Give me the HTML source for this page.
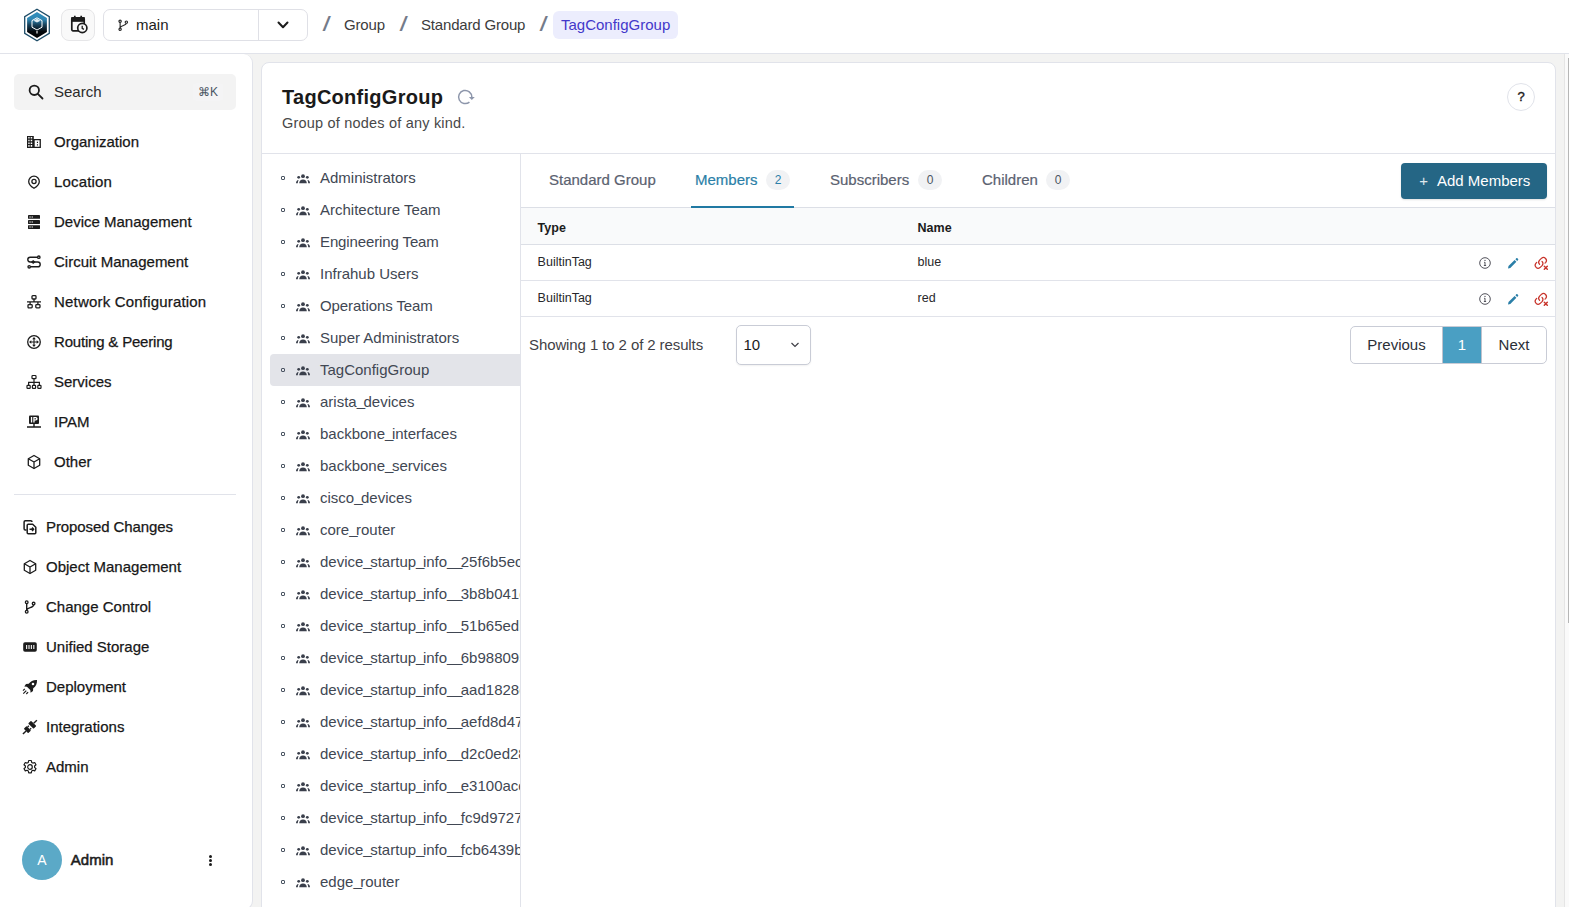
<!DOCTYPE html>
<html lang="en">
<head>
<meta charset="utf-8">
<title>TagConfigGroup - Infrahub</title>
<style>
*{box-sizing:border-box;margin:0;padding:0}
html,body{width:1569px;height:907px;overflow:hidden}
body{font-family:"Liberation Sans",Arial,sans-serif;background:#f3f3f2;color:#1c1c1c;position:relative;font-size:14px}
svg{display:block}
.abs{position:absolute}
/* ---------- header ---------- */
#header{position:absolute;left:0;top:0;width:1569px;height:54px;background:#fff;border-bottom:1px solid #e1e3ea}
#logo{position:absolute;left:23px;top:8px;width:28px;height:34px}
#timebtn{position:absolute;left:61px;top:9px;width:34px;height:32px;border:1px solid #e6e6e8;border-radius:8px;background:#f9f9f9}
#timebtn svg{position:absolute;left:7.500px;top:4.300px}
#branch{position:absolute;left:103px;top:9px;width:205px;height:32px;border:1px solid #dfe0e6;border-radius:7px;background:#fff}
#branch .div{position:absolute;left:154px;top:0;width:1px;height:30px;background:#dfe0e6}
#branch .name{position:absolute;left:32px;top:0;line-height:30px;font-size:15px;color:#1c1c1c}
#branch svg.bi{position:absolute;left:13px;top:9px}
#branch svg.chev{position:absolute;left:172px;top:9px}
.crumb{position:absolute;top:12px;height:26px;line-height:26px;font-size:15px;color:#3c3c3c;white-space:nowrap}
.crumb.sep{color:#747b89;font-size:20px;transform:scaleX(1.5);transform-origin:50% 50%;top:11px}
.crumb.cur{background:#ecedfd;color:#4338ca;border-radius:6px;padding:0 8px;top:11px;height:28px;line-height:28px}
/* ---------- sidebar ---------- */
#sidebar{position:absolute;left:-1px;top:54px;width:254px;height:856px;background:#fff;border:1px solid #e1e3ea;border-top:none;border-radius:0 9px 9px 0}
#search{position:absolute;left:14px;top:74px;width:222px;height:36px;background:#f3f3f3;border-radius:5px}
#search svg{position:absolute;left:13px;top:9px}
#search .t{position:absolute;left:40px;top:0;line-height:36px;font-size:15px;color:#2a2a2a}
#search .k{position:absolute;right:13px;top:9px;height:18px;line-height:18px;font-size:12px;color:#4b5563;padding:0 5px;background:#f4f4f5;border-radius:4px}
.nav{position:absolute;left:0;height:40px;width:252px}
.nav svg{position:absolute;top:12px}
.nav .l{position:absolute;top:0;line-height:40px;font-size:15px;color:#171717;white-space:nowrap;-webkit-text-stroke:.25px #171717}
.nav.a svg{left:26px}.nav.a .l{left:54px}
.nav.b svg{left:22px}.nav.b .l{left:46px}
#navsep{position:absolute;left:14px;top:494px;width:222px;height:1px;background:#e1e3ea}
#avatar{position:absolute;left:22px;top:840px;width:40px;height:40px;border-radius:50%;background:#5ba9c7;color:#fff;text-align:center;line-height:40px;font-size:14px}
#uname{position:absolute;left:70.800px;top:849px;line-height:22px;font-size:15px;color:#1c1c1c;-webkit-text-stroke:.55px #1c1c1c}
#udots{position:absolute;left:208.800px;top:854.500px;width:4px}
#udots i{display:block;width:3px;height:3px;border-radius:50%;background:#1c1c1c;margin-bottom:1.200px}
/* ---------- main card ---------- */
#card{position:absolute;left:261px;top:62px;width:1295px;height:860px;background:#fff;border:1px solid #e1e3ea;border-radius:8px}
#title{position:absolute;left:282px;top:83px;line-height:28px;font-size:20px;font-weight:bold;color:#1a1a1a;white-space:nowrap;letter-spacing:.27px}
#refresh{position:absolute;left:456px;top:88px}
#subtitle{position:absolute;left:282px;top:113px;line-height:20px;font-size:14.500px;color:#484848;white-space:nowrap;letter-spacing:.2px}
#help{position:absolute;left:1507px;top:83px;width:28px;height:28px;border:1px solid #e1e3ea;border-radius:50%;text-align:center;line-height:26px;font-size:13px;color:#1c1c1c;background:#fff;-webkit-text-stroke:.4px #1c1c1c}
#hdiv{position:absolute;left:262px;top:153px;width:1293px;height:1px;background:#e1e3ea}
#vdiv{position:absolute;left:520px;top:154px;width:1px;height:760px;background:#e1e3ea}
/* tree */
#tree{position:absolute;left:263px;top:154px;width:257px;height:760px;overflow:hidden}
.ti{position:absolute;left:7px;width:250px;height:32px;white-space:nowrap}
.ti.sel{background:#e3e4e9;border-radius:4px 0 0 4px}
.ti .d{position:absolute;left:11px;top:14px;width:4px;height:4px;border:1px solid #4b5563;border-radius:1px}
.ti svg{position:absolute;left:25px;top:11px}
.ti .n i{font-style:normal;letter-spacing:-1.500px;position:relative;top:-1.500px}
.ti .n{position:absolute;left:50px;top:0;line-height:32px;font-size:15px;color:#414753}
/* tabs */
.tab{position:absolute;top:154px;height:53px;line-height:52px;font-size:15px;color:#5b6270;white-space:nowrap;-webkit-text-stroke:.2px currentColor}
.tab.on{color:#2b7fa8}
.badge{position:absolute;top:170px;height:20px;min-width:24px;border-radius:10px;background:#f1f2f4;color:#4b5563;font-size:12px;line-height:20px;text-align:center}
#tabline{position:absolute;left:691px;top:206px;width:103px;height:2px;background:#2079a3;z-index:2}
#addbtn{position:absolute;left:1401px;top:163px;width:146px;height:36px;border-radius:4px;background:#256685;box-shadow:0 1px 2px rgba(0,0,0,.12);color:#fff;font-size:15px;line-height:36px;white-space:nowrap}
#addbtn .p{position:absolute;left:18.300px;top:-.5px;font-size:15px;opacity:.85}
#addbtn .t{position:absolute;left:36px;top:0}
/* table */
#thead{position:absolute;left:521px;top:207px;width:1034px;height:38px;background:#f9fafb;border-top:1px solid #dcdfe6;border-bottom:1px solid #dcdfe6}
.th{position:absolute;margin-left:.6px;top:209px;line-height:38px;font-size:12.5px;font-weight:bold;color:#1c1c1c}
.td{position:absolute;margin-left:.6px;line-height:36px;font-size:12.5px;color:#27272a}
.rline{position:absolute;left:521px;width:1034px;height:1px;background:#e1e3ea}
.act{position:absolute}
/* pagination */
#showing{position:absolute;left:529px;top:326px;line-height:38px;font-size:15px;color:#3f3f46;white-space:nowrap;letter-spacing:-.1px}
#psel{position:absolute;left:736px;top:325px;width:75px;height:40px;border:1px solid #c9ccd6;border-radius:5px;background:#fff;box-shadow:0 1px 2px rgba(0,0,0,.06)}
#psel .v{position:absolute;left:6.500px;top:0;line-height:38px;font-size:15px;color:#1c1c1c}
#psel svg{position:absolute;left:53px;top:15px}
#pager{position:absolute;left:1350px;top:326px;width:197px;height:38px;border:1px solid #c9ccd6;border-radius:5px;background:#fff;overflow:hidden}
#pager span{position:absolute;top:0;height:36px;line-height:36px;font-size:15px;color:#2b2f38;text-align:center}
#pager .pv{left:0;width:91px}
#pager .pn{left:91px;width:40px;background:#4a9fc3;color:#fff;border-left:1px solid #bfc2cd;border-right:1px solid #bfc2cd}
#pager .nx{left:131px;width:64px}
/* scrollbar */
#sbtrack{position:absolute;left:1564px;top:54px;width:5px;height:853px;background:#fafafa;border-left:1px solid #e5e5e5}
#sbthumb{position:absolute;left:1568px;top:58px;width:2px;height:565px;background:#b6b6b6}
</style>
</head>
<body>
<div id="header">
  <svg id="logo" viewBox="0 0 28 34">
    <defs><linearGradient id="lg" x1="0" y1="0" x2="0" y2="1"><stop offset="0" stop-color="#2f8fbd"/><stop offset=".28" stop-color="#2f86b2"/><stop offset=".5" stop-color="#163f58"/><stop offset=".75" stop-color="#05090d"/><stop offset="1" stop-color="#000"/></linearGradient></defs>
    <polygon points="14,1.2 26.3,8.6 26.3,25.4 14,32.8 1.7,25.4 1.7,8.600" fill="#fff" stroke="#1f4d68" stroke-width="1.3"/>
    <polygon points="14,4 23.9,10 23.9,24 14,30 4.1,24 4.1,10" fill="url(#lg)"/>
    <path d="M14 9.800 L19 12.600 L19 19.200 L14 22 L9 19.200 L9 12.600 Z" fill="none" stroke="#fff" stroke-width="1"/>
    <path d="M10.500 12.700 L14 14.600 L17.500 12.700 L14 10.800 Z" fill="#fff" opacity=".85"/>
    <path d="M14 23 L14 25.400" stroke="#fff" stroke-width="1.1"/>
  </svg>
  <div id="timebtn">
    <svg width="18" height="20" viewBox="0 0 18 20" fill="none" stroke="#1c1c1c">
      <rect x="1.800" y="3.800" width="12.400" height="13" rx="1.200" stroke-width="1.700"/>
      <rect x="1.800" y="3.800" width="12.400" height="3.400" fill="#1c1c1c" stroke-width="1.200"/>
      <path d="M4.800 1.800v2.500M11.200 1.800v2.500" stroke-width="1.700"/>
      <circle cx="12.300" cy="14" r="4.600" fill="#f9f9f9" stroke-width="1.700"/>
      <path d="M12.200 11.800v2.500l1.700 1.100" stroke-width="1.300"/>
    </svg>
  </div>
  <div id="branch">
    <svg class="bi" width="12.500" height="12.500" viewBox="0 0 14 14" fill="none" stroke="#2a2a2a" stroke-width="1.300">
      <circle cx="3.500" cy="2.500" r="1.300"/><circle cx="3.500" cy="11.500" r="1.300"/><circle cx="10.500" cy="3.500" r="1.300"/>
      <path d="M3.500 3.800v6.400M10.500 4.800c0 3-7 2-7 5.400"/>
    </svg>
    <span class="name">main</span>
    <span class="div"></span>
    <svg class="chev" width="14" height="12" viewBox="0 0 14 12" fill="none" stroke="#1c1c1c" stroke-width="2" stroke-linecap="round" stroke-linejoin="round"><path d="M2.500 3.500L7 8.200l4.500-4.700"/></svg>
  </div>
  <span class="crumb sep" style="left:323.500px">/</span>
  <span class="crumb" style="left:344px;letter-spacing:-.15px">Group</span>
  <span class="crumb sep" style="left:400.500px">/</span>
  <span class="crumb" style="left:421px;letter-spacing:-.18px">Standard Group</span>
  <span class="crumb sep" style="left:541px">/</span>
  <span class="crumb cur" style="left:553px">TagConfigGroup</span>
</div>
<div id="sidebar"></div>
<nav id="sidenav">
<div id="search"><svg width="18" height="18" viewBox="0 0 18 18" fill="none" stroke="#1c1c1c" stroke-width="1.800"><circle cx="7.300" cy="7.300" r="4.700"/><path d="M10.800 10.800l4.700 4.700" stroke-linecap="round"/></svg><span class="t">Search</span><span class="k">⌘K</span></div>
<a class="nav a" style="top:122px"><svg width="16" height="16" viewBox="0 0 16 16"><path d="M1 2h6.800v2.900h7.100V14H1z" fill="#1c1c1c"/><path d="M2.300 3.100h1.300v1.500H2.300zM4.700 3.100h1.500v1.500H4.700zM2.300 5.700h1.300v1.500H2.300zM4.700 5.700h1.500v1.500H4.700zM2.300 8.400h1.300v1.500H2.300zM4.700 8.400h1.500v1.500H4.700zM2.300 11h1.300v1.700H2.300zM4.700 11h1.500v1.700H4.700zM8.700 6.200h4.900v6.600H8.700z" fill="#fff"/><path d="M10.900 7.700h1.100v1.200h-1.100zM10.900 10.300h1.100v1.200h-1.100z" fill="#1c1c1c"/></svg><span class="l">Organization</span></a>
<a class="nav a" style="top:162px"><svg width="16" height="16" viewBox="0 0 16 16" fill="none" stroke="#1c1c1c" stroke-width="1.300"><path d="M8 14.300c-2.500-1.500-5.300-3.500-5.300-6.800a5.300 5.300 0 0 1 10.600 0c0 3.300-2.800 5.300-5.300 6.800z"/><circle cx="8" cy="7.500" r="2.100"/></svg><span class="l" style="letter-spacing:.15px">Location</span></a>
<a class="nav a" style="top:202px"><svg width="16" height="16" viewBox="0 0 16 16" fill="#1c1c1c"><rect x="2" y="1" width="12" height="3.800" rx=".4"/><rect x="2" y="6.100" width="12" height="3.800" rx=".4"/><rect x="2" y="11.200" width="12" height="3.800" rx=".4"/><path d="M3.400 2.400h1.300v1H3.400zM5.600 2.400h1.300v1H5.600zM3.400 7.500h1.300v1H3.400zM5.600 7.500h1.300v1H5.600zM3.400 12.600h1.300v1H3.400zM5.600 12.600h1.300v1H5.600z" fill="#fff"/></svg><span class="l">Device Management</span></a>
<a class="nav a" style="top:242px"><svg width="16" height="16" viewBox="0 0 16 16" fill="none" stroke="#1c1c1c" stroke-width="1.400"><path d="M11.500 3.200H4.200a2.300 2.300 0 0 0 0 4.800h7.600a2.300 2.300 0 0 1 0 4.800H4.500"/><circle cx="12.800" cy="3.200" r="1.200" fill="#fff"/><circle cx="3.200" cy="12.800" r="1.200" fill="#fff"/><path d="M4.800 8l2.400-1.900L9.600 8 7.200 9.900z" fill="#1c1c1c" stroke="none"/></svg><span class="l">Circuit Management</span></a>
<a class="nav a" style="top:282px"><svg width="16" height="16" viewBox="0 0 16 16" fill="none" stroke="#1c1c1c" stroke-width="1.300"><rect x="6" y="1.700" width="4" height="3.300" rx=".8"/><rect x="2" y="10.600" width="4.200" height="3.300" rx=".8"/><rect x="9.800" y="10.600" width="4.200" height="3.300" rx=".8"/><path d="M8 5v2.800M1 7.900h14M4.100 7.900v2.700M11.900 7.900v2.700"/></svg><span class="l" style="letter-spacing:.19px">Network Configuration</span></a>
<a class="nav a" style="top:322px"><svg width="16" height="16" viewBox="0 0 16 16" fill="none" stroke="#1c1c1c"><circle cx="8" cy="8" r="6.300" stroke-width="1.300"/><path d="M8 3l1.800 2.300H6.200zM8 13l1.800-2.300H6.200zM3 8l2.300-1.800v3.600zM13 8l-2.300-1.800v3.600z" fill="#1c1c1c" stroke="none"/><path d="M8 4.500v7M4.500 8h7" stroke-width="1.100"/></svg><span class="l" style="letter-spacing:-.19px">Routing &amp; Peering</span></a>
<a class="nav a" style="top:362px"><svg width="16" height="16" viewBox="0 0 16 16" fill="none" stroke="#1c1c1c" stroke-width="1.200"><rect x="6" y="1.500" width="4" height="3.200" rx=".8"/><rect x="1" y="11.300" width="3.200" height="3" rx=".6"/><rect x="6.400" y="11.300" width="3.200" height="3" rx=".6"/><rect x="11.800" y="11.300" width="3.200" height="3" rx=".6"/><path d="M8 4.700v6.600M2.600 11.300V8.400h10.800v2.900"/></svg><span class="l">Services</span></a>
<a class="nav a" style="top:402px"><svg width="16" height="16" viewBox="0 0 16 16"><rect x="3" y="1.500" width="10" height="8.500" rx="1" fill="#1c1c1c"/><path d="M4.900 3h1.300v5.400H4.900zM7.300 3h2.500a1.800 1.800 0 0 1 0 3.600H8.600v1.800H7.300z" fill="#fff"/><path d="M8.600 4.100h1.100v1.400H8.600z" fill="#1c1c1c"/><path d="M8 10v2.800M1 13h14M6 13h4" stroke="#1c1c1c" stroke-width="1.400" fill="none"/></svg><span class="l">IPAM</span></a>
<a class="nav a" style="top:442px"><svg width="16" height="16" viewBox="0 0 16 16" fill="none" stroke="#1c1c1c" stroke-width="1.300" stroke-linejoin="round"><path d="M8 1.500l5.700 3.200v6.600L8 14.500l-5.700-3.200V4.700z"/><path d="M2.300 4.700L8 8l5.700-3.300M8 8v6.500"/></svg><span class="l">Other</span></a>
<div id="navsep"></div>
<a class="nav b" style="top:507px"><svg width="16" height="16" viewBox="0 0 16 16" fill="none" stroke="#1c1c1c" stroke-width="1.500" stroke-linejoin="round"><path d="M4.500 11H3.300a1.200 1.200 0 0 1-1.200-1.200V2.900a1.200 1.200 0 0 1 1.200-1.200h5.500a1.200 1.200 0 0 1 1.200 1.200"/><path d="M6.200 5.200h4.500l3.100 3v5.500a1 1 0 0 1-1 1H6.200a1 1 0 0 1-1-1V6.200a1 1 0 0 1 1-1z"/><path d="M7.500 10.300h4M10 8.600l1.700 1.700-1.700 1.700"/></svg><span class="l" style="letter-spacing:-.1px">Proposed Changes</span></a>
<a class="nav b" style="top:547px"><svg width="16" height="16" viewBox="0 0 16 16" fill="none" stroke="#1c1c1c" stroke-width="1.300" stroke-linejoin="round"><path d="M8 1.500l5.700 3.200v6.600L8 14.500l-5.700-3.200V4.700z"/><path d="M2.300 4.700L8 8l5.700-3.300M8 8v6.500"/></svg><span class="l">Object Management</span></a>
<a class="nav b" style="top:587px"><svg width="16" height="16" viewBox="0 0 16 16" fill="none" stroke="#1c1c1c" stroke-width="1.300"><circle cx="4.700" cy="3.300" r="1.350"/><circle cx="4.700" cy="12.700" r="1.350"/><circle cx="11.600" cy="4.600" r="1.350"/><path d="M4.700 4.700v6.600M11.600 6c0 3.200-6.900 2-6.900 5.300" stroke-width="1.400"/></svg><span class="l">Change Control</span></a>
<a class="nav b" style="top:627px"><svg width="16" height="16" viewBox="0 0 16 16"><rect x="1.200" y="3.200" width="13.600" height="9.600" rx="1.800" fill="#1c1c1c"/><path d="M4 6h1.200v4H4zM6.400 6h1.200v4H6.400zM8.800 6H10v4H8.800zM11.200 6h1.200v4h-1.200z" fill="#fff" opacity=".9"/></svg><span class="l">Unified Storage</span></a>
<a class="nav b" style="top:667px"><svg width="16" height="16" viewBox="0 0 16 16" fill="#1c1c1c"><path d="M15 1c-3.500-.2-6.300 1-8.300 3.800L4 5 2.300 7.400l2.600.3 3.400 3.400.3 2.600L11 12l.2-2.700C14 7.300 15.200 4.500 15 1zM11 6.300a1.300 1.300 0 1 1 0-2.600 1.300 1.300 0 0 1 0 2.600z"/><path d="M1.300 14.700l3-3M1 11.700l1.800-1.800M4.300 15l1.800-1.800" stroke="#1c1c1c" stroke-width="1.200" fill="none"/></svg><span class="l">Deployment</span></a>
<a class="nav b" style="top:707px"><svg width="16" height="16" viewBox="0 0 16 16" fill="#1c1c1c"><g transform="rotate(-45 8 8)"><rect x="-2" y="7.300" width="4.500" height="1.400"/><rect x="2.300" y="4.900" width="4" height="6.200" rx=".7"/><rect x="6.300" y="5.700" width="1.700" height="1.300"/><rect x="6.300" y="9" width="1.700" height="1.300"/><rect x="9.200" y="4.200" width="4" height="7.600" rx=".7"/><rect x="13.200" y="7.300" width="4.500" height="1.400"/></g></svg><span class="l">Integrations</span></a>
<a class="nav b" style="top:747px"><svg width="16" height="16" viewBox="0 0 16 16" fill="none" stroke="#1c1c1c" stroke-width="1.200" stroke-linejoin="round"><path d="M6.700 1.500h2.600l.4 1.900 1.200.7 1.800-.6 1.300 2.200-1.400 1.300v1.400l1.400 1.300-1.300 2.200-1.800-.6-1.200.7-.4 1.900H6.700l-.4-1.900-1.200-.7-1.800.6L2 9.700l1.400-1.300V7L2 5.700l1.300-2.200 1.800.6 1.200-.7z"/><circle cx="8" cy="8" r="2.300"/></svg><span class="l">Admin</span></a>
<div id="avatar">A</div><div id="uname">Admin</div><div id="udots"><i></i><i></i><i></i></div>
</nav>
<div id="card"></div>
<main id="content">
<h1 id="title">TagConfigGroup</h1>
<svg id="refresh" width="20" height="18" viewBox="0 0 20 18" fill="none"><path d="M15.800 9A6.600 6.600 0 1 0 13.440 14.060" stroke="#8d96ab" stroke-width="1.500"/><path d="M12.900 9.100h5.900l-3 2.900z" fill="#8d96ab"/></svg>
<p id="subtitle">Group of nodes of any kind.</p>
<div id="help">?</div>
<div id="hdiv"></div><div id="vdiv"></div>
<div id="tree">
<div class="ti" style="top:8px"><span class="d"></span><svg width="16" height="12" viewBox="0 0 16 12" fill="#3a3f4b"><circle cx="8" cy="3.200" r="1.900"/><circle cx="3.700" cy="4.300" r="1.400"/><circle cx="12.300" cy="4.300" r="1.400"/><path d="M4.200 10.300c0-2.300 1.600-3.700 3.800-3.700s3.800 1.400 3.800 3.700z"/><path d="M1 10.300c0-1.800.9-3 2.600-3.200-.5.800-.8 1.900-.8 3.200zM15 10.300c0-1.800-.9-3-2.600-3.200.5.800.8 1.900.8 3.200z"/></svg><span class="n">Administrators</span></div>
<div class="ti" style="top:40px"><span class="d"></span><svg width="16" height="12" viewBox="0 0 16 12" fill="#3a3f4b"><circle cx="8" cy="3.200" r="1.900"/><circle cx="3.700" cy="4.300" r="1.400"/><circle cx="12.300" cy="4.300" r="1.400"/><path d="M4.200 10.300c0-2.300 1.600-3.700 3.800-3.700s3.800 1.400 3.800 3.700z"/><path d="M1 10.300c0-1.800.9-3 2.600-3.200-.5.800-.8 1.900-.8 3.200zM15 10.300c0-1.800-.9-3-2.600-3.200.5.800.8 1.900.8 3.200z"/></svg><span class="n">Architecture Team</span></div>
<div class="ti" style="top:72px"><span class="d"></span><svg width="16" height="12" viewBox="0 0 16 12" fill="#3a3f4b"><circle cx="8" cy="3.200" r="1.900"/><circle cx="3.700" cy="4.300" r="1.400"/><circle cx="12.300" cy="4.300" r="1.400"/><path d="M4.200 10.300c0-2.300 1.600-3.700 3.800-3.700s3.800 1.400 3.800 3.700z"/><path d="M1 10.300c0-1.800.9-3 2.600-3.200-.5.800-.8 1.900-.8 3.200zM15 10.300c0-1.800-.9-3-2.600-3.200.5.800.8 1.900.8 3.200z"/></svg><span class="n" style="letter-spacing:-.12px">Engineering Team</span></div>
<div class="ti" style="top:104px"><span class="d"></span><svg width="16" height="12" viewBox="0 0 16 12" fill="#3a3f4b"><circle cx="8" cy="3.200" r="1.900"/><circle cx="3.700" cy="4.300" r="1.400"/><circle cx="12.300" cy="4.300" r="1.400"/><path d="M4.200 10.300c0-2.300 1.600-3.700 3.800-3.700s3.800 1.400 3.800 3.700z"/><path d="M1 10.300c0-1.800.9-3 2.600-3.200-.5.800-.8 1.900-.8 3.200zM15 10.300c0-1.800-.9-3-2.600-3.200.5.800.8 1.900.8 3.200z"/></svg><span class="n">Infrahub Users</span></div>
<div class="ti" style="top:136px"><span class="d"></span><svg width="16" height="12" viewBox="0 0 16 12" fill="#3a3f4b"><circle cx="8" cy="3.200" r="1.900"/><circle cx="3.700" cy="4.300" r="1.400"/><circle cx="12.300" cy="4.300" r="1.400"/><path d="M4.200 10.300c0-2.300 1.600-3.700 3.800-3.700s3.800 1.400 3.800 3.700z"/><path d="M1 10.300c0-1.800.9-3 2.600-3.200-.5.800-.8 1.900-.8 3.200zM15 10.300c0-1.800-.9-3-2.600-3.200.5.800.8 1.900.8 3.200z"/></svg><span class="n" style="letter-spacing:-.08px">Operations Team</span></div>
<div class="ti" style="top:168px"><span class="d"></span><svg width="16" height="12" viewBox="0 0 16 12" fill="#3a3f4b"><circle cx="8" cy="3.200" r="1.900"/><circle cx="3.700" cy="4.300" r="1.400"/><circle cx="12.300" cy="4.300" r="1.400"/><path d="M4.200 10.300c0-2.300 1.600-3.700 3.800-3.700s3.800 1.400 3.800 3.700z"/><path d="M1 10.300c0-1.800.9-3 2.600-3.200-.5.800-.8 1.900-.8 3.200zM15 10.300c0-1.800-.9-3-2.600-3.200.5.800.8 1.900.8 3.200z"/></svg><span class="n">Super Administrators</span></div>
<div class="ti sel" style="top:200px"><span class="d"></span><svg width="16" height="12" viewBox="0 0 16 12" fill="#3a3f4b"><circle cx="8" cy="3.200" r="1.900"/><circle cx="3.700" cy="4.300" r="1.400"/><circle cx="12.300" cy="4.300" r="1.400"/><path d="M4.200 10.300c0-2.300 1.600-3.700 3.800-3.700s3.800 1.400 3.800 3.700z"/><path d="M1 10.300c0-1.800.9-3 2.600-3.200-.5.800-.8 1.900-.8 3.200zM15 10.300c0-1.800-.9-3-2.600-3.200.5.800.8 1.900.8 3.200z"/></svg><span class="n">TagConfigGroup</span></div>
<div class="ti" style="top:232px"><span class="d"></span><svg width="16" height="12" viewBox="0 0 16 12" fill="#3a3f4b"><circle cx="8" cy="3.200" r="1.900"/><circle cx="3.700" cy="4.300" r="1.400"/><circle cx="12.300" cy="4.300" r="1.400"/><path d="M4.200 10.300c0-2.300 1.600-3.700 3.800-3.700s3.800 1.400 3.800 3.700z"/><path d="M1 10.300c0-1.800.9-3 2.600-3.200-.5.800-.8 1.900-.8 3.200zM15 10.300c0-1.800-.9-3-2.600-3.200.5.800.8 1.900.8 3.200z"/></svg><span class="n">arista<i>_</i>devices</span></div>
<div class="ti" style="top:264px"><span class="d"></span><svg width="16" height="12" viewBox="0 0 16 12" fill="#3a3f4b"><circle cx="8" cy="3.200" r="1.900"/><circle cx="3.700" cy="4.300" r="1.400"/><circle cx="12.300" cy="4.300" r="1.400"/><path d="M4.200 10.300c0-2.300 1.600-3.700 3.800-3.700s3.800 1.400 3.800 3.700z"/><path d="M1 10.300c0-1.800.9-3 2.600-3.200-.5.800-.8 1.900-.8 3.200zM15 10.300c0-1.800-.9-3-2.600-3.200.5.800.8 1.900.8 3.200z"/></svg><span class="n">backbone<i>_</i>interfaces</span></div>
<div class="ti" style="top:296px"><span class="d"></span><svg width="16" height="12" viewBox="0 0 16 12" fill="#3a3f4b"><circle cx="8" cy="3.200" r="1.900"/><circle cx="3.700" cy="4.300" r="1.400"/><circle cx="12.300" cy="4.300" r="1.400"/><path d="M4.200 10.300c0-2.300 1.600-3.700 3.800-3.700s3.800 1.400 3.800 3.700z"/><path d="M1 10.300c0-1.800.9-3 2.600-3.200-.5.800-.8 1.900-.8 3.200zM15 10.300c0-1.800-.9-3-2.600-3.200.5.800.8 1.900.8 3.200z"/></svg><span class="n">backbone<i>_</i>services</span></div>
<div class="ti" style="top:328px"><span class="d"></span><svg width="16" height="12" viewBox="0 0 16 12" fill="#3a3f4b"><circle cx="8" cy="3.200" r="1.900"/><circle cx="3.700" cy="4.300" r="1.400"/><circle cx="12.300" cy="4.300" r="1.400"/><path d="M4.200 10.300c0-2.300 1.600-3.700 3.800-3.700s3.800 1.400 3.800 3.700z"/><path d="M1 10.300c0-1.800.9-3 2.600-3.200-.5.800-.8 1.900-.8 3.200zM15 10.300c0-1.800-.9-3-2.600-3.200.5.800.8 1.900.8 3.200z"/></svg><span class="n">cisco<i>_</i>devices</span></div>
<div class="ti" style="top:360px"><span class="d"></span><svg width="16" height="12" viewBox="0 0 16 12" fill="#3a3f4b"><circle cx="8" cy="3.200" r="1.900"/><circle cx="3.700" cy="4.300" r="1.400"/><circle cx="12.300" cy="4.300" r="1.400"/><path d="M4.200 10.300c0-2.300 1.600-3.700 3.800-3.700s3.800 1.400 3.800 3.700z"/><path d="M1 10.300c0-1.800.9-3 2.600-3.200-.5.800-.8 1.900-.8 3.200zM15 10.300c0-1.800-.9-3-2.600-3.200.5.800.8 1.900.8 3.200z"/></svg><span class="n">core<i>_</i>router</span></div>
<div class="ti" style="top:392px"><span class="d"></span><svg width="16" height="12" viewBox="0 0 16 12" fill="#3a3f4b"><circle cx="8" cy="3.200" r="1.900"/><circle cx="3.700" cy="4.300" r="1.400"/><circle cx="12.300" cy="4.300" r="1.400"/><path d="M4.200 10.300c0-2.300 1.600-3.700 3.800-3.700s3.800 1.400 3.800 3.700z"/><path d="M1 10.300c0-1.800.9-3 2.600-3.200-.5.800-.8 1.900-.8 3.200zM15 10.300c0-1.800-.9-3-2.600-3.200.5.800.8 1.900.8 3.200z"/></svg><span class="n">device<i>_</i>startup<i>_</i>info<i>_</i><i>_</i>25f6b5ec</span></div>
<div class="ti" style="top:424px"><span class="d"></span><svg width="16" height="12" viewBox="0 0 16 12" fill="#3a3f4b"><circle cx="8" cy="3.200" r="1.900"/><circle cx="3.700" cy="4.300" r="1.400"/><circle cx="12.300" cy="4.300" r="1.400"/><path d="M4.200 10.300c0-2.300 1.600-3.700 3.800-3.700s3.800 1.400 3.800 3.700z"/><path d="M1 10.300c0-1.800.9-3 2.600-3.200-.5.800-.8 1.900-.8 3.200zM15 10.300c0-1.800-.9-3-2.600-3.200.5.800.8 1.900.8 3.200z"/></svg><span class="n">device<i>_</i>startup<i>_</i>info<i>_</i><i>_</i>3b8b041c</span></div>
<div class="ti" style="top:456px"><span class="d"></span><svg width="16" height="12" viewBox="0 0 16 12" fill="#3a3f4b"><circle cx="8" cy="3.200" r="1.900"/><circle cx="3.700" cy="4.300" r="1.400"/><circle cx="12.300" cy="4.300" r="1.400"/><path d="M4.200 10.300c0-2.300 1.600-3.700 3.800-3.700s3.800 1.400 3.800 3.700z"/><path d="M1 10.300c0-1.800.9-3 2.600-3.200-.5.800-.8 1.900-.8 3.200zM15 10.300c0-1.800-.9-3-2.600-3.200.5.800.8 1.900.8 3.200z"/></svg><span class="n">device<i>_</i>startup<i>_</i>info<i>_</i><i>_</i>51b65edb</span></div>
<div class="ti" style="top:488px"><span class="d"></span><svg width="16" height="12" viewBox="0 0 16 12" fill="#3a3f4b"><circle cx="8" cy="3.200" r="1.900"/><circle cx="3.700" cy="4.300" r="1.400"/><circle cx="12.300" cy="4.300" r="1.400"/><path d="M4.200 10.300c0-2.300 1.600-3.700 3.800-3.700s3.800 1.400 3.800 3.700z"/><path d="M1 10.300c0-1.800.9-3 2.600-3.200-.5.800-.8 1.900-.8 3.200zM15 10.300c0-1.800-.9-3-2.600-3.200.5.800.8 1.900.8 3.200z"/></svg><span class="n">device<i>_</i>startup<i>_</i>info<i>_</i><i>_</i>6b988095</span></div>
<div class="ti" style="top:520px"><span class="d"></span><svg width="16" height="12" viewBox="0 0 16 12" fill="#3a3f4b"><circle cx="8" cy="3.200" r="1.900"/><circle cx="3.700" cy="4.300" r="1.400"/><circle cx="12.300" cy="4.300" r="1.400"/><path d="M4.200 10.300c0-2.300 1.600-3.700 3.800-3.700s3.800 1.400 3.800 3.700z"/><path d="M1 10.300c0-1.800.9-3 2.600-3.200-.5.800-.8 1.900-.8 3.200zM15 10.300c0-1.800-.9-3-2.600-3.200.5.800.8 1.900.8 3.200z"/></svg><span class="n">device<i>_</i>startup<i>_</i>info<i>_</i><i>_</i>aad1828c</span></div>
<div class="ti" style="top:552px"><span class="d"></span><svg width="16" height="12" viewBox="0 0 16 12" fill="#3a3f4b"><circle cx="8" cy="3.200" r="1.900"/><circle cx="3.700" cy="4.300" r="1.400"/><circle cx="12.300" cy="4.300" r="1.400"/><path d="M4.200 10.300c0-2.300 1.600-3.700 3.800-3.700s3.800 1.400 3.800 3.700z"/><path d="M1 10.300c0-1.800.9-3 2.600-3.200-.5.800-.8 1.900-.8 3.200zM15 10.300c0-1.800-.9-3-2.600-3.200.5.800.8 1.900.8 3.200z"/></svg><span class="n">device<i>_</i>startup<i>_</i>info<i>_</i><i>_</i>aefd8d47</span></div>
<div class="ti" style="top:584px"><span class="d"></span><svg width="16" height="12" viewBox="0 0 16 12" fill="#3a3f4b"><circle cx="8" cy="3.200" r="1.900"/><circle cx="3.700" cy="4.300" r="1.400"/><circle cx="12.300" cy="4.300" r="1.400"/><path d="M4.200 10.300c0-2.300 1.600-3.700 3.800-3.700s3.800 1.400 3.800 3.700z"/><path d="M1 10.300c0-1.800.9-3 2.600-3.200-.5.800-.8 1.900-.8 3.200zM15 10.300c0-1.800-.9-3-2.600-3.200.5.800.8 1.900.8 3.200z"/></svg><span class="n">device<i>_</i>startup<i>_</i>info<i>_</i><i>_</i>d2c0ed28</span></div>
<div class="ti" style="top:616px"><span class="d"></span><svg width="16" height="12" viewBox="0 0 16 12" fill="#3a3f4b"><circle cx="8" cy="3.200" r="1.900"/><circle cx="3.700" cy="4.300" r="1.400"/><circle cx="12.300" cy="4.300" r="1.400"/><path d="M4.200 10.300c0-2.300 1.600-3.700 3.800-3.700s3.800 1.400 3.800 3.700z"/><path d="M1 10.300c0-1.800.9-3 2.600-3.200-.5.800-.8 1.900-.8 3.200zM15 10.300c0-1.800-.9-3-2.600-3.200.5.800.8 1.900.8 3.200z"/></svg><span class="n">device<i>_</i>startup<i>_</i>info<i>_</i><i>_</i>e3100ace</span></div>
<div class="ti" style="top:648px"><span class="d"></span><svg width="16" height="12" viewBox="0 0 16 12" fill="#3a3f4b"><circle cx="8" cy="3.200" r="1.900"/><circle cx="3.700" cy="4.300" r="1.400"/><circle cx="12.300" cy="4.300" r="1.400"/><path d="M4.200 10.300c0-2.300 1.600-3.700 3.800-3.700s3.800 1.400 3.800 3.700z"/><path d="M1 10.300c0-1.800.9-3 2.600-3.200-.5.800-.8 1.900-.8 3.200zM15 10.300c0-1.800-.9-3-2.600-3.200.5.800.8 1.900.8 3.200z"/></svg><span class="n">device<i>_</i>startup<i>_</i>info<i>_</i><i>_</i>fc9d9727</span></div>
<div class="ti" style="top:680px"><span class="d"></span><svg width="16" height="12" viewBox="0 0 16 12" fill="#3a3f4b"><circle cx="8" cy="3.200" r="1.900"/><circle cx="3.700" cy="4.300" r="1.400"/><circle cx="12.300" cy="4.300" r="1.400"/><path d="M4.200 10.300c0-2.300 1.600-3.700 3.800-3.700s3.800 1.400 3.800 3.700z"/><path d="M1 10.300c0-1.800.9-3 2.600-3.200-.5.800-.8 1.900-.8 3.200zM15 10.300c0-1.800-.9-3-2.600-3.200.5.800.8 1.900.8 3.200z"/></svg><span class="n">device<i>_</i>startup<i>_</i>info<i>_</i><i>_</i>fcb6439b</span></div>
<div class="ti" style="top:712px"><span class="d"></span><svg width="16" height="12" viewBox="0 0 16 12" fill="#3a3f4b"><circle cx="8" cy="3.200" r="1.900"/><circle cx="3.700" cy="4.300" r="1.400"/><circle cx="12.300" cy="4.300" r="1.400"/><path d="M4.200 10.300c0-2.300 1.600-3.700 3.800-3.700s3.800 1.400 3.800 3.700z"/><path d="M1 10.300c0-1.800.9-3 2.600-3.200-.5.800-.8 1.900-.8 3.200zM15 10.300c0-1.800-.9-3-2.600-3.200.5.800.8 1.900.8 3.200z"/></svg><span class="n">edge<i>_</i>router</span></div>
<div class="ti" style="top:744px"><span class="d"></span><svg width="16" height="12" viewBox="0 0 16 12" fill="#3a3f4b"><circle cx="8" cy="3.200" r="1.900"/><circle cx="3.700" cy="4.300" r="1.400"/><circle cx="12.300" cy="4.300" r="1.400"/><path d="M4.200 10.300c0-2.300 1.600-3.700 3.800-3.700s3.800 1.400 3.800 3.700z"/><path d="M1 10.300c0-1.800.9-3 2.600-3.200-.5.800-.8 1.900-.8 3.200zM15 10.300c0-1.800-.9-3-2.600-3.200.5.800.8 1.900.8 3.200z"/></svg><span class="n">firewall</span></div>
</div>
<span class="tab" style="left:549px">Standard Group</span>
<span class="tab on" style="left:695px">Members</span><span class="badge" style="left:766px;color:#2b7fa8">2</span>
<span class="tab" style="left:830px">Subscribers</span><span class="badge" style="left:918px">0</span>
<span class="tab" style="left:982px">Children</span><span class="badge" style="left:1046px">0</span>
<div id="tabline"></div>
<div id="addbtn"><span class="p">+</span><span class="t">Add Members</span></div>
<div id="thead"></div>
<span class="th" style="left:537px">Type</span><span class="th" style="left:917px">Name</span>
<span class="td" style="left:537px;top:244px">BuiltinTag</span><span class="td" style="left:917px;top:244px">blue</span>
<div class="rline" style="top:280px"></div>
<span class="td" style="left:537px;top:280px">BuiltinTag</span><span class="td" style="left:917px;top:280px">red</span>
<div class="rline" style="top:316px"></div>
<svg class="act" style="left:1478px;top:256px" width="14" height="14" viewBox="0 0 14 14" fill="none" stroke="#52525b"><circle cx="7" cy="7" r="5.300" stroke-width="1"/><path d="M7 6.200v3.200M5.900 9.500h2.200M6.100 6.300H7" stroke-width="1"/><circle cx="7" cy="4.400" r=".7" fill="#52525b" stroke="none"/></svg>
<svg class="act" style="left:1506px;top:256px" width="14" height="14" viewBox="0 0 14 14" fill="#2b7fa8"><path d="M2 12.400l.5-2.300 6.100-6.100 1.800 1.800-6.100 6.100zM9.400 3.200l.9-.9c.3-.3.800-.3 1.100 0l.7.700c.3.300.3.800 0 1.100l-.9.900z"/></svg>
<svg class="act" style="left:1533px;top:255px" width="16" height="16" viewBox="0 0 16 16" fill="none" stroke="#c8342b" stroke-width="1.200" stroke-linecap="round"><path d="M6.600 9.400a3 3 0 0 1 0-4.200l2-2a3 3 0 0 1 4.200 4.200l-.8.800"/><path d="M9 6.400a3 3 0 0 1 .3 3.900l-2.300 2.300a3 3 0 0 1-4.200-4.200l.9-.9" /><path d="M11.300 11.300l3 3M14.300 11.300l-3 3" stroke-width="1.500"/></svg>
<svg class="act" style="left:1478px;top:292px" width="14" height="14" viewBox="0 0 14 14" fill="none" stroke="#52525b"><circle cx="7" cy="7" r="5.300" stroke-width="1"/><path d="M7 6.200v3.200M5.900 9.500h2.200M6.100 6.300H7" stroke-width="1"/><circle cx="7" cy="4.400" r=".7" fill="#52525b" stroke="none"/></svg>
<svg class="act" style="left:1506px;top:292px" width="14" height="14" viewBox="0 0 14 14" fill="#2b7fa8"><path d="M2 12.400l.5-2.300 6.100-6.100 1.800 1.800-6.100 6.100zM9.400 3.200l.9-.9c.3-.3.800-.3 1.100 0l.7.700c.3.300.3.800 0 1.100l-.9.900z"/></svg>
<svg class="act" style="left:1533px;top:291px" width="16" height="16" viewBox="0 0 16 16" fill="none" stroke="#c8342b" stroke-width="1.200" stroke-linecap="round"><path d="M6.600 9.400a3 3 0 0 1 0-4.200l2-2a3 3 0 0 1 4.200 4.200l-.8.800"/><path d="M9 6.400a3 3 0 0 1 .3 3.900l-2.300 2.300a3 3 0 0 1-4.200-4.200l.9-.9" /><path d="M11.300 11.300l3 3M14.300 11.300l-3 3" stroke-width="1.500"/></svg>
<span id="showing">Showing 1 to 2 of 2 results</span>
<div id="psel"><span class="v">10</span><svg width="10" height="8" viewBox="0 0 10 8" fill="none" stroke="#3f3f46" stroke-width="1.200"><path d="M1.500 2l3.500 3.500L8.500 2"/></svg></div>
<div id="pager"><span class="pv">Previous</span><span class="pn">1</span><span class="nx">Next</span></div>
</main>
<div id="sbtrack"></div><div id="sbthumb"></div>
</body>
</html>
